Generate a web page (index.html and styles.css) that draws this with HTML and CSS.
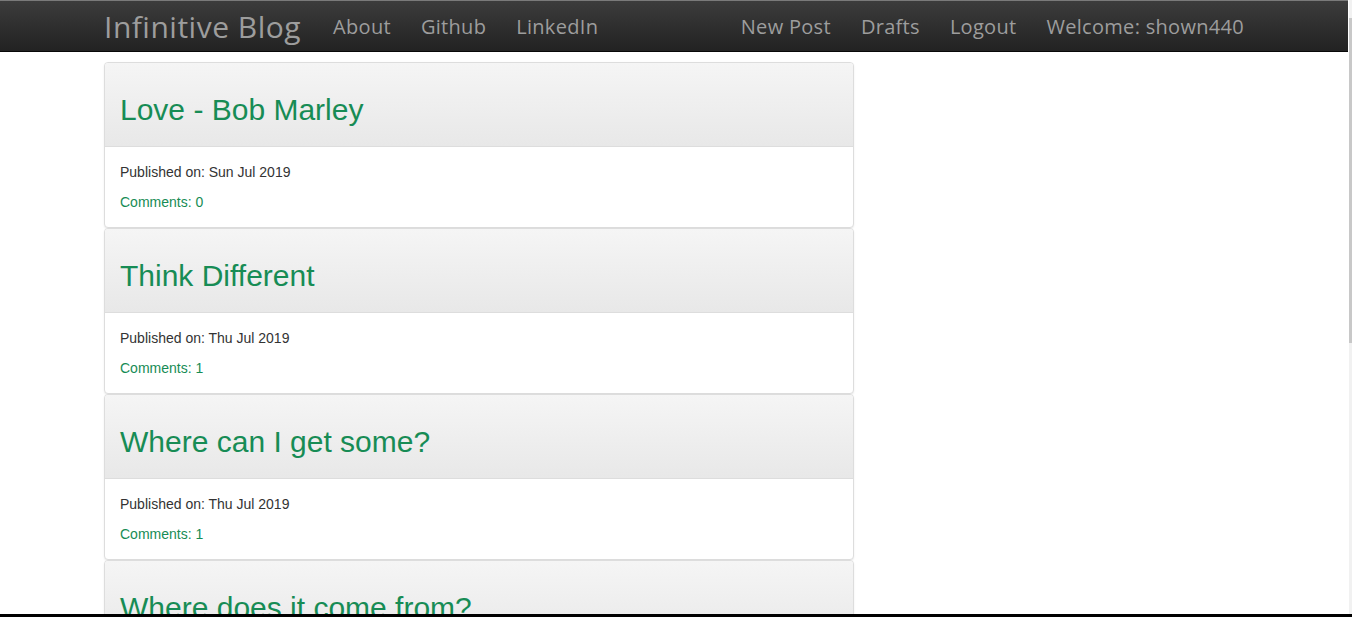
FILE: index.html
```html
<!DOCTYPE html>
<html>
<head>
<meta charset="utf-8">
<title>Infinitive Blog</title>
<link rel="stylesheet" href="styles.css">
</head>
<body>
<div class="screen">
  <div class="viewport">
    <div class="page">
      <nav class="navbar">
        <div class="container nav-inner">
          <div class="nav-left">
            <a class="brand" href="#">Infinitive Blog</a>
            <a class="nav-link" href="#">About</a>
            <a class="nav-link" href="#">Github</a>
            <a class="nav-link" href="#">LinkedIn</a>
          </div>
          <div class="nav-right">
            <a class="nav-link" href="#">New Post</a>
            <a class="nav-link" href="#">Drafts</a>
            <a class="nav-link" href="#">Logout</a>
            <span class="nav-link welcome">Welcome: shown440</span>
          </div>
        </div>
      </nav>
      <main class="container content">
        <div class="posts">
          <article class="panel">
            <div class="panel-heading"><h2 class="post-title">Love - Bob Marley</h2></div>
            <div class="panel-body">
              <p class="meta">Published on: Sun Jul 2019</p>
              <a class="comments" href="#">Comments: 0</a>
            </div>
          </article>
          <article class="panel">
            <div class="panel-heading"><h2 class="post-title">Think Different</h2></div>
            <div class="panel-body">
              <p class="meta">Published on: Thu Jul 2019</p>
              <a class="comments" href="#">Comments: 1</a>
            </div>
          </article>
          <article class="panel">
            <div class="panel-heading"><h2 class="post-title">Where can I get some?</h2></div>
            <div class="panel-body">
              <p class="meta">Published on: Thu Jul 2019</p>
              <a class="comments" href="#">Comments: 1</a>
            </div>
          </article>
          <article class="panel">
            <div class="panel-heading"><h2 class="post-title">Where does it come from?</h2></div>
            <div class="panel-body">
              <p class="meta">Published on: Thu Jul 2019</p>
              <a class="comments" href="#">Comments: 2</a>
            </div>
          </article>
        </div>
      </main>
    </div>
    <div class="scrollbar"><div class="thumb"></div></div>
  </div>
  <div class="bottom-bar"></div>
</div>
</body>
</html>
```
FILE: styles.css
```css
html, body {
  margin: 0;
  padding: 0;
  height: 617px;
  overflow: hidden;
  background: #fff;
}
.screen {
  display: grid;
  grid-template-rows: 614px 3px;
  height: 617px;
}
.viewport {
  display: flex;
  overflow: hidden;
}
.page {
  flex: 1;
  overflow: hidden;
  font-family: "Liberation Sans", Arial, sans-serif;
  font-size: 14px;
  line-height: 20px;
  color: #333;
}
.scrollbar {
  width: 3px;
  margin-left: 1px;
  background: #f1f1f1;
  padding-top: 18px;
}
.thumb {
  height: 325px;
  background: #c8c8c8;
}
.bottom-bar {
  background: #000;
}
.container {
  width: 1140px;
  margin: 0 auto;
}
.navbar {
  height: 50px;
  border-top: 1px solid #7a7a7a;
  border-bottom: 1px solid #080808;
  background: linear-gradient(to bottom, #3c3c3c 0%, #222 100%);
  font-family: "Open Sans", "DejaVu Sans", sans-serif;
}
.nav-inner {
  display: flex;
  justify-content: space-between;
  align-items: center;
  height: 50px;
  padding-top: 2px;
  box-sizing: border-box;
}
.nav-left, .nav-right {
  display: flex;
  align-items: center;
  gap: 30px;
}
.brand {
  color: #9d9d9d;
  font-size: 30px;
  letter-spacing: 0.5px;
  margin-right: 2px;
  text-decoration: none;
  line-height: 48px;
}
.nav-link {
  color: #9d9d9d;
  font-size: 20px;
  letter-spacing: 0.3px;
  text-decoration: none;
  line-height: 48px;
}
.content {
  padding-top: 10px;
}
.posts {
  width: 750px;
  display: flex;
  flex-direction: column;
}
.panel {
  border: 1px solid #ddd;
  border-radius: 4px;
  box-shadow: 0 1px 2px rgba(0, 0, 0, 0.08);
  background: #fff;
  overflow: hidden;
}
.panel-heading {
  padding: 10px 15px;
  background: linear-gradient(to bottom, #f5f5f5 0%, #e8e8e8 100%);
  border-bottom: 1px solid #ddd;
}
.post-title {
  margin: 20px 0 10px;
  font-family: "Liberation Sans", Arial, sans-serif;
  font-size: 30px;
  font-weight: normal;
  line-height: 33px;
  color: #178c55;
}
.panel-body {
  padding: 15px;
}
.meta {
  margin: 0 0 10px;
}
.comments {
  display: block;
  color: #178c55;
  text-decoration: none;
}
```
